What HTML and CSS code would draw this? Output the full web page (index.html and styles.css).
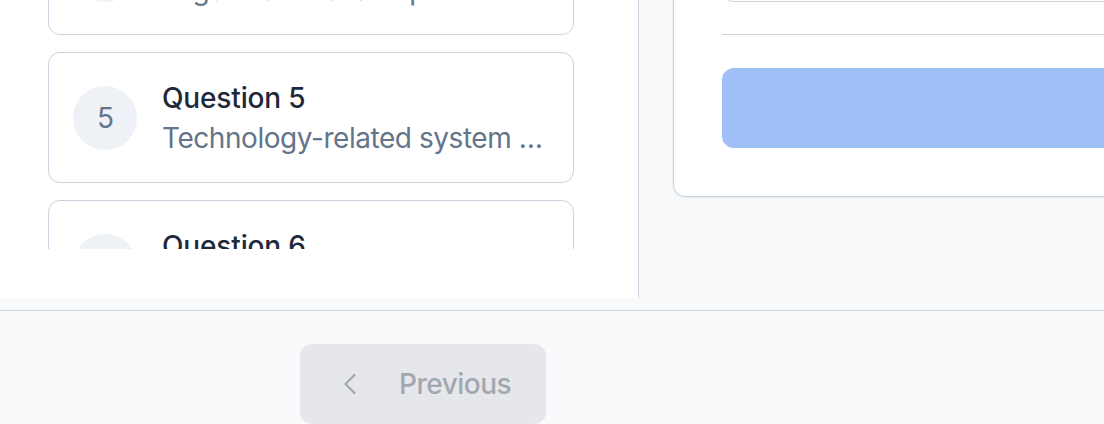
FILE: index.html
```html
<!DOCTYPE html>
<html lang="en">
<head>
<meta charset="utf-8">
<title>Questions</title>
<link rel="stylesheet" href="styles.css">
</head>
<body>
<div class="main">
  <aside class="left">
    <div class="list">
      <div class="list-inner">
        <div class="q-card">
          <div class="q-num">4</div>
          <div class="q-text">
            <div class="q-title">Question 4</div>
            <div class="q-sub">Organizational and process-related questions</div>
          </div>
        </div>
        <div class="q-card">
          <div class="q-num">5</div>
          <div class="q-text">
            <div class="q-title">Question 5</div>
            <div class="q-sub">Technology-related system questions</div>
          </div>
        </div>
        <div class="q-card">
          <div class="q-num">6</div>
          <div class="q-text">
            <div class="q-title">Question 6</div>
            <div class="q-sub">Security and compliance questions</div>
          </div>
        </div>
      </div>
    </div>
  </aside>
  <section class="right">
    <div class="panel-card">
      <div class="field"></div>
      <div class="divider"></div>
      <div class="submit"></div>
    </div>
  </section>
</div>
<footer class="footer">
  <button class="prev" type="button" disabled>
    <svg class="prev-icon" viewBox="0 0 24 24" fill="none" stroke="currentColor" stroke-width="1.5" stroke-linecap="round" stroke-linejoin="round"><path d="m15 18-6-6 6-6"/></svg>
    <span>Previous</span>
  </button>
</footer>
</body>
</html>
```
FILE: styles.css
```css
* { box-sizing: border-box; }

html, body {
  margin: 0;
  padding: 0;
}

body {
  background: #f8fafc;
  font-family: Inter, "Noto Sans", "Liberation Sans", sans-serif;
  overflow: hidden;
  width: 1104px;
  height: 424px;
}

.main {
  display: flex;
  height: 298px;
  margin-bottom: 12px;
}

.left {
  width: 639px;
  flex-shrink: 0;
  background: #ffffff;
  border-right: 1px solid #cbd5e1;
  padding: 0 64px 49px 48px;
}

.list {
  height: 249px;
  overflow: hidden;
}

.list-inner {
  display: flex;
  flex-direction: column;
  gap: 17px;
  margin-top: -96px;
}

.q-card {
  display: flex;
  align-items: center;
  gap: 25px;
  border: 1px solid #c9d3e0;
  border-radius: 12px;
  padding: 25px 24px 24px 24px;
  background: #ffffff;
}

.q-num {
  width: 64px;
  height: 64px;
  flex-shrink: 0;
  border-radius: 50%;
  background: #eef2f6;
  color: #64748b;
  font-size: 28px;
  display: flex;
  align-items: center;
  justify-content: center;
  padding-left: 1px;
}

.q-text {
  flex: 1;
  min-width: 0;
}

.q-title {
  font-size: 28px;
  line-height: 40px;
  font-weight: 500;
  color: #1e293b;
  letter-spacing: -0.15px;
}

.q-sub {
  font-size: 28px;
  line-height: 40px;
  color: #64748b;
  letter-spacing: -0.45px;
  white-space: nowrap;
  overflow: hidden;
  text-overflow: ellipsis;
}

.right {
  flex: 1;
  min-width: 0;
  background: #f8fafc;
  overflow: hidden;
  display: flex;
  flex-direction: column;
  justify-content: flex-end;
  padding: 0 0 101px 34px;
}

.panel-card {
  flex-shrink: 0;
  width: 720px;
  background: #ffffff;
  border: 1px solid #c9d3e0;
  border-radius: 12px;
  padding: 48px;
  box-shadow: 0 1px 3px rgba(15, 23, 42, 0.08);
}

.field {
  height: 120px;
  border: 1px solid #c9d3e0;
  border-radius: 12px;
}

.divider {
  height: 1px;
  background: #cbd5e1;
  margin: 32px 0 33px;
}

.submit {
  height: 80px;
  border-radius: 12px;
  background: #9fbff7;
}

.footer {
  border-top: 1px solid #cbd5e1;
  background: #f8fafc;
  padding: 33px 0 0 300px;
}

.prev {
  display: inline-flex;
  align-items: center;
  gap: 31px;
  height: 80px;
  padding: 0 35px 0 32px;
  border: none;
  border-radius: 12px;
  background: #e5e7eb;
  color: #a3a8b0;
  font-family: Inter, "Noto Sans", "Liberation Sans", sans-serif;
  font-size: 28px;
  font-weight: 500;
  letter-spacing: -0.5px;
}

.prev-icon {
  width: 36px;
  height: 36px;
}
```
